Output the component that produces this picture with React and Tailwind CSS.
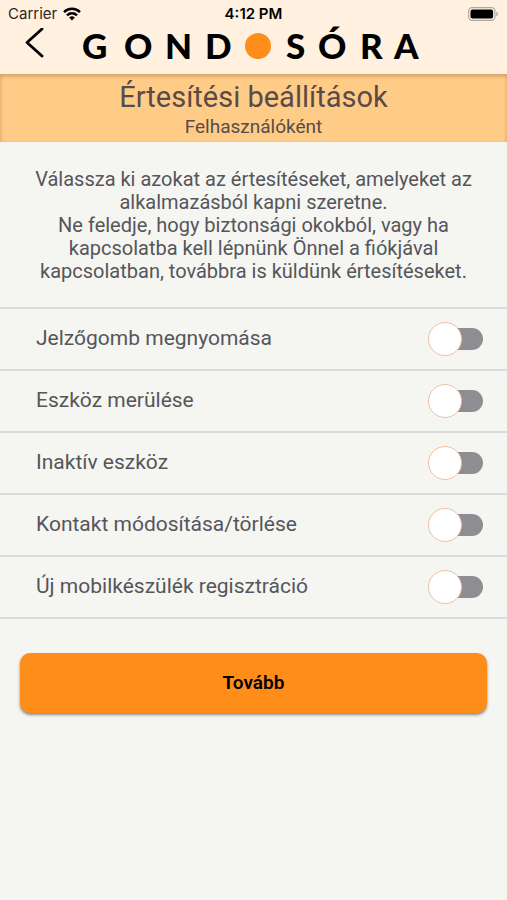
import { useState } from "react";

const OPTIONS = [
  { id: "button", label: "Jelzőgomb megnyomása" },
  { id: "battery", label: "Eszköz merülése" },
  { id: "inactive", label: "Inaktív eszköz" },
  { id: "contact", label: "Kontakt módosítása/törlése" },
  { id: "device", label: "Új mobilkészülék regisztráció" },
];

function StatusBar() {
  return (
    <div className="grid grid-cols-[1fr_auto_1fr] items-center h-6 px-2 pt-1 font-[Inter,sans-serif] text-[15px] leading-5 text-black">
      <div className="flex items-center gap-1.5">
        <span className="text-[#2b2622]">Carrier</span>
        <svg viewBox="0 0 18 14" className="w-[18px] h-[14px]" fill="none" stroke="#000" strokeWidth="2.5">
          <path d="M1 5.1a11.4 11.4 0 0 1 16 0" />
          <path d="M4 8.3a7.2 7.2 0 0 1 10 0" />
          <path d="M9 13.4 6.2 10.6a4 4 0 0 1 5.6 0z" fill="#000" stroke="none" />
        </svg>
      </div>
      <span className="text-center font-semibold">4:12 PM</span>
      <svg viewBox="0 0 31 14" className="w-[31px] h-[14px] justify-self-end" fill="none">
        <rect x="0.6" y="0.6" width="26.4" height="12.8" rx="3.6" stroke="#b3aa9e" strokeWidth="1.2" />
        <rect x="2.5" y="2.4" width="22.6" height="9.2" rx="2" fill="#000" />
        <path d="M28.3 4.6c2.2.8 2.2 4 0 4.8z" fill="#b3aa9e" />
      </svg>
    </div>
  );
}

function Logo() {
  return (
    <svg
      viewBox="0 -4 338 46"
      className="w-[338px] h-[46px] overflow-visible"
      role="img"
      aria-label="Gondosóra"
      fontFamily="Lato, sans-serif"
      fontSize="35"
      fontWeight="900"
    >
      <text x="0 42 83 123" y="31">GOND</text>
      <circle cx="176" cy="18" r="13" fill="#ff8d1a" />
      <text x="204 236 278 312" y="31">SÓRA</text>
    </svg>
  );
}

function ToggleRow({ id, label, checked, onChange }) {
  return (
    <li className="flex items-center justify-between h-[62px] pl-9 pr-6 border-b-2 border-[#dadbda]">
      <label htmlFor={id} className="text-[21px]">
        {label}
      </label>
      <input
        id={id}
        type="checkbox"
        checked={checked}
        onChange={(e) => onChange(e.target.checked)}
        className="appearance-none relative flex items-center w-[55px] h-[34px] cursor-pointer before:absolute before:right-0 before:w-[46px] before:h-[22px] before:rounded-full before:bg-[#8e8d92] checked:before:bg-[#ffcc88] after:relative after:w-[34px] after:h-[34px] after:rounded-full after:border after:border-[#f0c0a0] after:bg-white checked:after:ml-auto"
      />
    </li>
  );
}

export default function App() {
  const [settings, setSettings] = useState({});

  const toggle = (id, value) => setSettings((prev) => ({ ...prev, [id]: value }));

  return (
    <div className="min-h-screen bg-[#f5f5f2] font-[Roboto,sans-serif] text-[#55565a]">
      <header className="bg-[#fff0e0]">
        <StatusBar />
        <div className="flex items-start h-[50px] pl-6">
          <button type="button" aria-label="Vissza" className="w-[58px] h-8 mt-1">
            <svg viewBox="0 0 20 32" className="w-5 h-8" fill="none" stroke="#000" strokeWidth="2.8">
              <path d="M18 1 3 14.5 18 28" strokeLinecap="round" strokeLinejoin="round" />
            </svg>
          </button>
          <Logo />
        </div>
      </header>

      <div className="h-[68px] pt-1 bg-[#ffcc88] text-center text-[#5a4a48] shadow-[inset_0_2px_4px_#d09a5c]">
        <h1 className="text-[29px] leading-[38px]">Értesítési beállítások</h1>
        <p className="text-[19px] leading-[22px]">Felhasználóként</p>
      </div>

      <p className="px-8 pt-[26px] text-center text-xl leading-[23px]">
        Válassza ki azokat az értesítéseket, amelyeket az alkalmazásból kapni szeretne.
        <br />
        Ne feledje, hogy biztonsági okokból, vagy ha kapcsolatba kell lépnünk Önnel a fiókjával
        kapcsolatban, továbbra is küldünk értesítéseket.
      </p>

      <ul className="mt-6 border-t-2 border-[#dadbda]">
        {OPTIONS.map((o) => (
          <ToggleRow
            key={o.id}
            id={o.id}
            label={o.label}
            checked={!!settings[o.id]}
            onChange={(value) => toggle(o.id, value)}
          />
        ))}
      </ul>

      <div className="px-5 pt-[34px] pb-8">
        <button
          type="button"
          className="w-full h-[60px] rounded-[10px] bg-[#ff8d1a] text-[19px] font-semibold text-black shadow-[0_2px_3px_#8a8a8a]"
        >
          Tovább
        </button>
      </div>
    </div>
  );
}
